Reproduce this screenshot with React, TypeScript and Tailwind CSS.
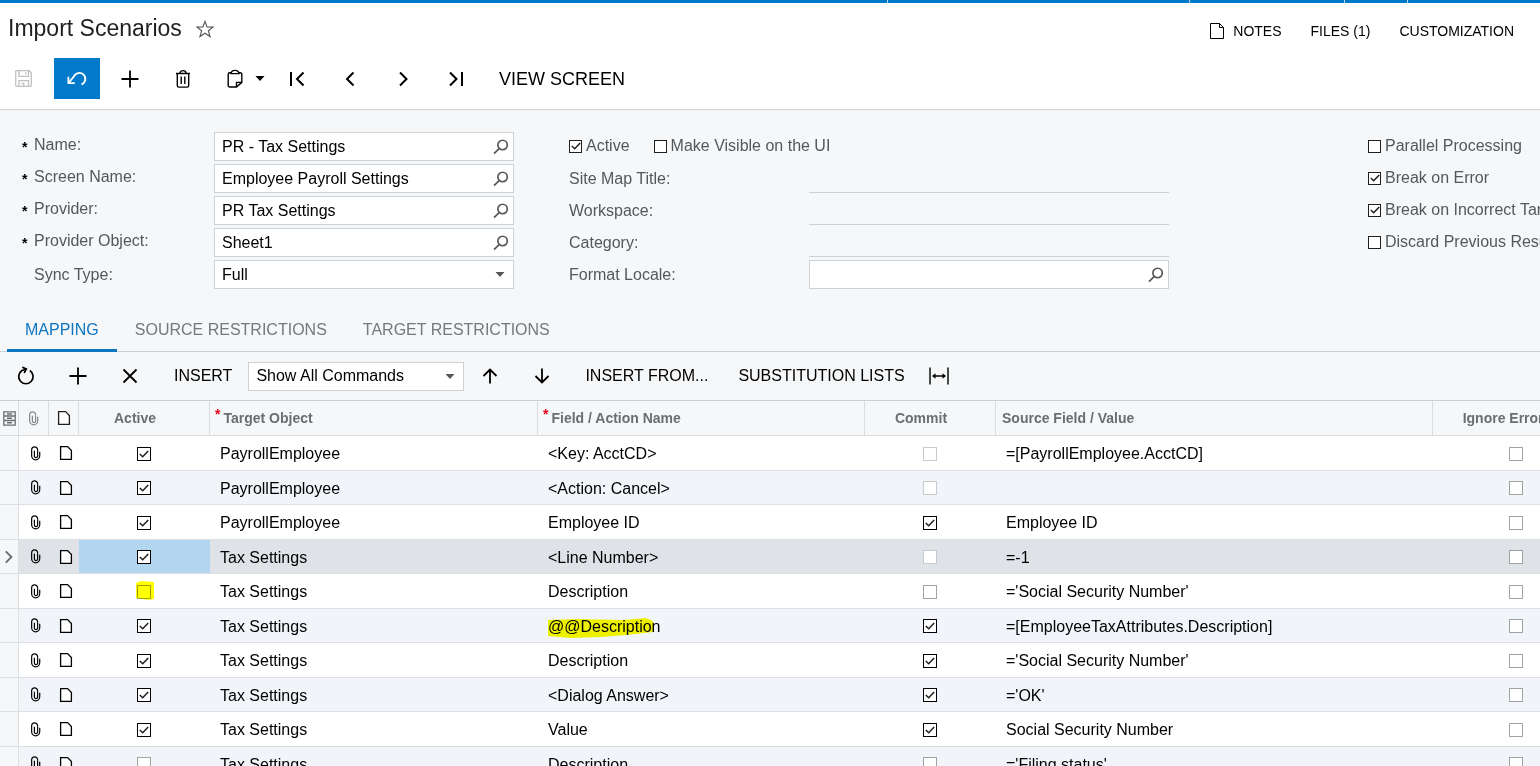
import { ReactNode } from "react";
import clsx from "clsx";

interface IconProps {
  className?: string;
}

/* ---------- icons ---------- */

function Icon({ children, className = "", size = 20, width = 1.8 }: { children: ReactNode; className?: string; size?: number; width?: number }) {
  return (
    <svg
      width={size}
      height={size}
      viewBox="0 0 20 20"
      fill="none"
      stroke="currentColor"
      strokeWidth={width}
      className={clsx("shrink-0", className)}
      aria-hidden="true"
    >
      {children}
    </svg>
  );
}

const SaveIcon = () => (
  <Icon width={1.3}>
    <path d="M2.7 1.7h12.6l2 2v12.6a1 1 0 0 1-1 1H2.7a1 1 0 0 1-1-1V2.7a1 1 0 0 1 1-1z" />
    <path d="M5 2v5.3h9.5V2M11.8 3v2.3M5 17v-5.3h9.5V17M7.5 14.5h2.3V17" />
  </Icon>
);

const UndoIcon = () => (
  <Icon width={1.8}>
    <path d="M1.8 13.700 6.800 7.600A6 6 0 1 1 14.500 15.500" />
    <path d="M1.400 7.800v6.300h6.400" />
  </Icon>
);

const PlusIcon = () => (
  <Icon>
    <path d="M10 1.5v17M1.5 10h17" />
  </Icon>
);

const TrashIcon = () => (
  <Icon width={1.4}>
    <path d="M3 4.5h14M4.300 4.500v12a1.600 1.600 0 0 0 1.600 1.600h8.200a1.600 1.600 0 0 0 1.600-1.600v-12M7 4.200c0-3.400 6-3.400 6 0M8.200 7.500v7.500M11.800 7.500v7.500" />
  </Icon>
);

const ClipboardIcon = () => (
  <Icon width={1.4}>
    <path d="M6.5 3.8H4.8a1.6 1.6 0 0 0-1.6 1.6v11a1.6 1.6 0 0 0 1.6 1.6h6.700l5.300-4.600v-8a1.600 1.600 0 0 0-1.600-1.600h-1.700" />
    <path d="M6 4.600c.3-4.300 7.700-4.300 8 0z" />
    <path d="M11.500 18v-4.600h5.300" />
  </Icon>
);

const FirstIcon = () => (
  <Icon width={2}>
    <path d="M4 3v14M16.500 3.500 10 10l6.500 6.500" />
  </Icon>
);

const PrevIcon = () => (
  <Icon width={2}>
    <path d="M13.500 3.500 7 10l6.500 6.500" />
  </Icon>
);

const NextIcon = () => (
  <Icon width={2}>
    <path d="M7 3.500 13.500 10 7 16.500" />
  </Icon>
);

const LastIcon = () => (
  <Icon width={2}>
    <path d="M16 3v14M4 3.500 10.500 10 4 16.500" />
  </Icon>
);

const RefreshIcon = () => (
  <Icon width={1.7}>
    <path d="M13.800 4.500A7.200 7.200 0 1 1 6 4.500L10 3.200" />
    <path d="M6.300 1.200 10.300 3 8.200 7" />
  </Icon>
);

const DeleteIcon = () => (
  <Icon>
    <path d="m3.500 3.500 13 13M16.500 3.500l-13 13" />
  </Icon>
);

const UpIcon = () => (
  <Icon>
    <path d="M10 17.500V4M3.500 10 10 3.500 16.500 10" />
  </Icon>
);

const DownIcon = () => (
  <Icon>
    <path d="M10 2.500V16M3.500 10l6.500 6.500L16.500 10" />
  </Icon>
);

const FitIcon = () => (
  <Icon width={1.4}>
    <path d="M1 1.500v17M19 1.500v17M4 10h12" />
    <path d="M6.500 7.300 3 10l3.500 2.700zM13.500 7.300 17 10l-3.500 2.700z" fill="currentColor" stroke="none" />
  </Icon>
);

const SearchIcon = () => (
  <Icon size={16} width={2.1}>
    <circle cx="12" cy="7.500" r="5.900" />
    <path d="M7.800 11.700 1.300 18.200" />
  </Icon>
);

function Caret({ className = "" }: IconProps) {
  return (
    <svg width="10" height="5" viewBox="0 0 10 5" className={clsx("pointer-events-none shrink-0", className)} aria-hidden="true">
      <path d="M0.500 0h9L5 5z" fill="currentColor" />
    </svg>
  );
}

function ClipIcon({ className = "" }: IconProps) {
  return (
    <svg width="11" height="15" viewBox="0 0 12 16" fill="none" stroke="currentColor" strokeWidth="1.300" className={className} aria-hidden="true">
      <path d="M8.300 4.500v6.700a1.800 1.800 0 0 1-3.500 0V5" />
      <path d="M8.300 4.500V4a3.200 3.200 0 0 0-6.500 0v6.500a4.400 4.400 0 0 0 8.800 0V6" />
    </svg>
  );
}

function NoteIcon({ className = "" }: IconProps) {
  return (
    <svg width="14" height="16" viewBox="0 0 14 16" stroke="currentColor" strokeWidth="1.300" className={className} aria-hidden="true">
      <path d="M1.600 1.600h7l3.800 4v8.800H1.600z" fill="white" />
    </svg>
  );
}

const ColumnsIcon = () => (
  <svg width="13" height="15" viewBox="0 0 13 15" fill="none" stroke="#6b6e70" strokeWidth="1.300" aria-hidden="true">
    <path d="M.8.8h11.400v13.400H.8zM.8 5h11.400M.8 9.500h11.400" />
    <path d="M4 3h5M4 7.300h5M4 11.800h5" strokeWidth="1.600" />
  </svg>
);

/* ---------- controls ---------- */

function ToolButton({ label, children, className = "" }: { label: string; children: ReactNode; className?: string }) {
  return (
    <button type="button" aria-label={label} className={clsx("flex h-[41px] w-[46px] shrink-0 items-center justify-center", className)}>
      {children}
    </button>
  );
}

function Check({ label, checked = false, tone = "border-[#1f1f1f]", size = "size-3.5" }: { label?: string; checked?: boolean; tone?: string; size?: string }) {
  return (
    <span className="inline-grid shrink-0 place-items-center">
      <input
        type="checkbox"
        aria-label={label}
        defaultChecked={checked}
        className={clsx("peer col-start-1 row-start-1 appearance-none border bg-white", tone, size)}
      />
      <svg
        width="10"
        height="10"
        viewBox="0 0 10 10"
        fill="none"
        stroke="#1f1f1f"
        strokeWidth="1.500"
        className="pointer-events-none invisible col-start-1 row-start-1 peer-checked:visible"
        aria-hidden="true"
      >
        <path d="M.8 5 3.700 7.800 9.200 2" />
      </svg>
    </span>
  );
}

function CheckField({ label, checked }: { label: string; checked?: boolean }) {
  return (
    <label className="flex h-7 items-center gap-1 whitespace-nowrap text-[#55585a]">
      <Check checked={checked} size="size-[13px]" />
      {label}
    </label>
  );
}

function Lookup({ id, value = "" }: { id: string; value?: string }) {
  return (
    <div className="flex h-[29px] min-w-0 flex-1 items-center border border-[#cfd2d4] bg-white pr-1 pl-[7px]">
      <input id={id} type="text" defaultValue={value} className="w-full min-w-0 bg-transparent text-black outline-none" />
      <button type="button" aria-label="Search" className="text-[#55585a]">
        <SearchIcon />
      </button>
    </div>
  );
}

function Dropdown({ id, label, value, className = "" }: { id: string; label?: string; value: string; className?: string }) {
  return (
    <div className={clsx("grid h-[29px] items-center border border-[#cfd2d4] bg-white", className)}>
      <select id={id} aria-label={label} className="col-start-1 row-start-1 h-full w-full appearance-none pl-[7px] text-black outline-none">
        <option>{value}</option>
      </select>
      <Caret className="col-start-1 row-start-1 mr-2 justify-self-end text-[#55585a]" />
    </div>
  );
}

function FieldLabel({ id, label, required }: { id: string; label: string; required?: boolean }) {
  return (
    <label htmlFor={id} className="flex w-48 shrink-0 whitespace-nowrap text-[#55585a]">
      <span className="w-3 shrink-0 text-sm leading-7 font-bold text-black">{required ? "*" : ""}</span>
      <span className="leading-6">{label}</span>
    </label>
  );
}

/* ---------- data ---------- */

const lookups = [
  { id: "name", label: "Name:", value: "PR - Tax Settings" },
  { id: "screen", label: "Screen Name:", value: "Employee Payroll Settings" },
  { id: "provider", label: "Provider:", value: "PR Tax Settings" },
  { id: "object", label: "Provider Object:", value: "Sheet1" },
];

const plainFields = [
  { id: "sitemap", label: "Site Map Title:" },
  { id: "workspace", label: "Workspace:" },
  { id: "category", label: "Category:" },
];

const options = [
  { label: "Parallel Processing", checked: false },
  { label: "Break on Error", checked: true },
  { label: "Break on Incorrect Target", checked: true },
  { label: "Discard Previous Result", checked: false },
];

interface Row {
  active: boolean;
  target: string;
  field: string;
  commit: boolean;
  locked?: boolean;
  source: string;
  selected?: boolean;
  marked?: "active" | "field";
}

const rows: Row[] = [
  { active: true, target: "PayrollEmployee", field: "<Key: AcctCD>", commit: false, locked: true, source: "=[PayrollEmployee.AcctCD]" },
  { active: true, target: "PayrollEmployee", field: "<Action: Cancel>", commit: false, locked: true, source: "" },
  { active: true, target: "PayrollEmployee", field: "Employee ID", commit: true, source: "Employee ID" },
  { active: true, target: "Tax Settings", field: "<Line Number>", commit: false, locked: true, source: "=-1", selected: true },
  { active: false, target: "Tax Settings", field: "Description", commit: false, source: "='Social Security Number'", marked: "active" },
  { active: true, target: "Tax Settings", field: "@@Description", commit: true, source: "=[EmployeeTaxAttributes.Description]", marked: "field" },
  { active: true, target: "Tax Settings", field: "Description", commit: true, source: "='Social Security Number'" },
  { active: true, target: "Tax Settings", field: "<Dialog Answer>", commit: true, source: "='OK'" },
  { active: true, target: "Tax Settings", field: "Value", commit: true, source: "Social Security Number" },
  { active: false, target: "Tax Settings", field: "Description", commit: false, source: "='Filing status'" },
];

/* ---------- sections ---------- */

function Header() {
  return (
    <header className="border-b border-[#cdd0d2] bg-white">
      <div className="flex h-[51px] items-center justify-between pr-[26px] pl-2">
        <div className="flex items-center gap-3.5">
          <h1 className="text-[23px] whitespace-nowrap text-[#1f1f1f]">Import Scenarios</h1>
          <button type="button" aria-label="Add to favorites" className="text-[#55585a]">
            <Icon size={18} width={1.3}>
              <path d="m10 1.500 2.300 6.200 6.600.2-5.200 4.100 1.900 6.400-5.600-3.700-5.600 3.700 1.900-6.400-5.200-4.100 6.600-.2z" />
            </Icon>
          </button>
        </div>
        <nav className="flex items-center gap-[29px] pt-1 text-sm whitespace-nowrap text-black">
          <a href="#notes" className="flex items-center gap-2">
            <svg width="16" height="18" viewBox="0 0 16 18" fill="none" stroke="currentColor" aria-hidden="true">
              <path d="M1.500 1.500h9l4 4v11h-13zM10.500 1.500v4h4" />
            </svg>
            NOTES
          </a>
          <a href="#files">FILES (1)</a>
          <a href="#customization">CUSTOMIZATION</a>
        </nav>
      </div>
      <div className="flex items-center gap-[7px] pt-1 pb-2.5 pl-px text-black">
        <ToolButton label="Save" className="text-[#bfc1c3]"><SaveIcon /></ToolButton>
        <ToolButton label="Cancel" className="bg-[#027acc] text-white"><UndoIcon /></ToolButton>
        <ToolButton label="Add"><PlusIcon /></ToolButton>
        <ToolButton label="Delete"><TrashIcon /></ToolButton>
        <button type="button" aria-label="Clipboard" className="flex h-[41px] w-[54px] items-center justify-end gap-2.5 pr-0.5">
          <ClipboardIcon />
          <Caret />
        </button>
        <ToolButton label="First"><FirstIcon /></ToolButton>
        <ToolButton label="Previous"><PrevIcon /></ToolButton>
        <ToolButton label="Next"><NextIcon /></ToolButton>
        <ToolButton label="Last"><LastIcon /></ToolButton>
        <button type="button" className="px-[13px] text-lg whitespace-nowrap">VIEW SCREEN</button>
      </div>
    </header>
  );
}

function SummaryForm() {
  return (
    <section className="flex pt-[22px] pb-[18px] pl-[22px]">
      <div className="flex w-[492px] shrink-0 flex-col gap-[3px]">
        {lookups.map((f) => (
          <div key={f.id} className="flex h-[29px] items-center">
            <FieldLabel id={f.id} label={f.label} required />
            <Lookup id={f.id} value={f.value} />
          </div>
        ))}
        <div className="flex h-[29px] items-center">
          <FieldLabel id="sync" label="Sync Type:" />
          <Dropdown id="sync" value="Full" className="flex-1" />
        </div>
      </div>

      <div className="ml-[55px] flex w-[600px] shrink-0 flex-col gap-[3px]">
        <div className="flex h-[29px] gap-6">
          <CheckField label="Active" checked />
          <CheckField label="Make Visible on the UI" />
        </div>
        {plainFields.map((f) => (
          <div key={f.id} className="flex h-[29px] items-center">
            <label htmlFor={f.id} className="w-60 shrink-0 text-[#55585a]">{f.label}</label>
            <input id={f.id} type="text" className="h-[29px] min-w-0 flex-1 border-b border-[#cfd2d4] bg-transparent outline-none" />
          </div>
        ))}
        <div className="flex items-center">
          <label htmlFor="locale" className="w-60 shrink-0 text-[#55585a]">Format Locale:</label>
          <Lookup id="locale" />
        </div>
      </div>

      <div className="ml-[199px] flex flex-col gap-1">
        {options.map((o) => (
          <CheckField key={o.label} label={o.label} checked={o.checked} />
        ))}
      </div>
    </section>
  );
}

function Tabs() {
  return (
    <div role="tablist" className="flex h-[45px] border-b border-[#cdd0d2] pl-[7px] whitespace-nowrap text-[#76797b]">
      <button type="button" role="tab" aria-selected="true" className="-mb-px border-b-3 border-[#0f76c2] px-[18px] pt-[3px] text-[#0f76c2]">
        MAPPING
      </button>
      <button type="button" role="tab" aria-selected="false" className="px-[18px] pt-px">SOURCE RESTRICTIONS</button>
      <button type="button" role="tab" aria-selected="false" className="px-[18px] pt-px">TARGET RESTRICTIONS</button>
    </div>
  );
}

function GridToolbar() {
  return (
    <div className="flex h-[49px] items-center border-b border-[#cdd0d2] pl-[3px] whitespace-nowrap text-black">
      <div className="flex items-center gap-1.5">
        <ToolButton label="Refresh"><RefreshIcon /></ToolButton>
        <ToolButton label="Add row"><PlusIcon /></ToolButton>
        <ToolButton label="Delete row"><DeleteIcon /></ToolButton>
      </div>
      <button type="button" className="ml-[5px] px-4">INSERT</button>
      <Dropdown id="commands" label="Commands" value="Show All Commands" className="w-54" />
      <div className="ml-[3px] flex items-center gap-1.5">
        <ToolButton label="Move up"><UpIcon /></ToolButton>
        <ToolButton label="Move down"><DownIcon /></ToolButton>
      </div>
      <button type="button" className="ml-[5px] px-[15px]">INSERT FROM...</button>
      <button type="button" className="pr-[11px] pl-[15px]">SUBSTITUTION LISTS</button>
      <ToolButton label="Fit to screen"><FitIcon /></ToolButton>
    </div>
  );
}

function Required() {
  return <span className="mr-[3px] align-top text-sm leading-3 text-[#e3001b]">*</span>;
}

function MappingGrid() {
  const th = "border-r border-b border-[#d9dce0] p-0 font-bold";
  const td = "border-b border-[#dcdfe4] p-0";
  const text = "pt-0.5 pl-2.5";

  return (
    <table className="w-full min-w-[1600px] table-fixed border-separate border-spacing-0 text-left whitespace-nowrap">
      <colgroup>
        <col className="w-[19px]" />
        <col className="w-[30px]" />
        <col className="w-[30px]" />
        <col className="w-[131px]" />
        <col className="w-[328px]" />
        <col className="w-[327px]" />
        <col className="w-[131px]" />
        <col className="w-[437px]" />
        <col />
      </colgroup>
      <thead className="text-sm text-[#6b6e70]">
        <tr className="h-[35px]">
          <th className={th}><div className="flex justify-center"><ColumnsIcon /></div></th>
          <th className={th}><ClipIcon className="mx-auto text-[#85888a]" /></th>
          <th className={th}><NoteIcon className="mx-auto text-[#1f1f1f]" /></th>
          <th className={clsx(th, "pr-[18px] text-center")}>Active</th>
          <th className={clsx(th, "pl-[5px]")}><Required />Target Object</th>
          <th className={clsx(th, "pl-[5px]")}><Required />Field / Action Name</th>
          <th className={clsx(th, "pr-[18px] text-center")}>Commit</th>
          <th className={clsx(th, "pl-1.5")}>Source Field / Value</th>
          <th className={clsx(th, "pr-[18px] text-center")}>Ignore Errors</th>
        </tr>
      </thead>
      <tbody className="text-black">
        {rows.map((row, i) => (
          <tr
            key={i}
            className={clsx(
              "odd:h-[35px] even:h-[34px]",
              row.selected ? "bg-[#dfe2e7]" : i % 2 ? "bg-[#f1f5fa]" : "bg-white"
            )}
          >
            <td className={clsx(td, "border-r bg-[#f5f7f9]")}>
              {row.selected && (
                <Icon size={16} width={2.4} className="mx-auto text-[#6b6e70]">
                  <path d="M6 3l7 7-7 7" />
                </Icon>
              )}
            </td>
            <td className={td}><ClipIcon className="ml-[11px]" /></td>
            <td className={td}><NoteIcon className="ml-2.5" /></td>
            <td className={clsx(td, "pt-px pr-0.5", row.selected && "bg-[#b3d6f0]")}>
              <div className="relative flex justify-center">
                <Check
                  label="Active"
                  checked={row.active}
                  tone={row.active ? "border-black" : "border-[#a0a2a4]"}
                />
                {/* marker over the disabled step */}
                {row.marked === "active" && (
                  <svg width="20" height="20" viewBox="0 0 20 20" className="pointer-events-none absolute -top-1 left-14 mix-blend-multiply" aria-hidden="true">
                    <path d="M1 2 6 0l13 1v17l-6 1-12-2z" fill="#ffff00" />
                  </svg>
                )}
              </div>
            </td>
            <td className={clsx(td, text)}>{row.target}</td>
            <td className={clsx(td, text)}>
              <span className="relative">
                {row.field}
                {row.marked === "field" && (
                  <svg width="106" height="20" viewBox="0 0 106 20" className="pointer-events-none absolute top-0 left-0 mix-blend-multiply" aria-hidden="true">
                    <path d="M0 2 30 1 75 2 98 0l7 3v11l-27 3-24 2-32 1-22-2z" fill="#fbfb00" />
                  </svg>
                )}
              </span>
            </td>
            <td className={clsx(td, "pt-px pr-0.5")}>
              <div className="flex justify-center">
                <Check
                  label="Commit"
                  checked={row.commit}
                  tone={row.commit ? "border-black" : row.locked ? "border-[#c8cacc]" : "border-[#a0a2a4]"}
                />
              </div>
            </td>
            <td className={clsx(td, text)}>{row.source}</td>
            <td className={clsx(td, "pt-px pr-0.5")}>
              <div className="flex justify-center">
                <Check label="Ignore errors" tone="border-[#a0a2a4]" />
              </div>
            </td>
          </tr>
        ))}
      </tbody>
    </table>
  );
}

export default function App() {
  return (
    <div className="h-screen overflow-hidden bg-[#f5f7f9] font-['Liberation_Sans',Arial,sans-serif] text-base">
      <div className="flex h-[3px] bg-[#027acc]">
        <span className="w-[888px] border-r border-white/70" />
        <span className="w-[302px] border-r border-white/70" />
        <span className="w-[155px] border-r border-white/70" />
        <span className="w-[63px] border-r border-white/70" />
      </div>
      <Header />
      <SummaryForm />
      <Tabs />
      <GridToolbar />
      <MappingGrid />
    </div>
  );
}
